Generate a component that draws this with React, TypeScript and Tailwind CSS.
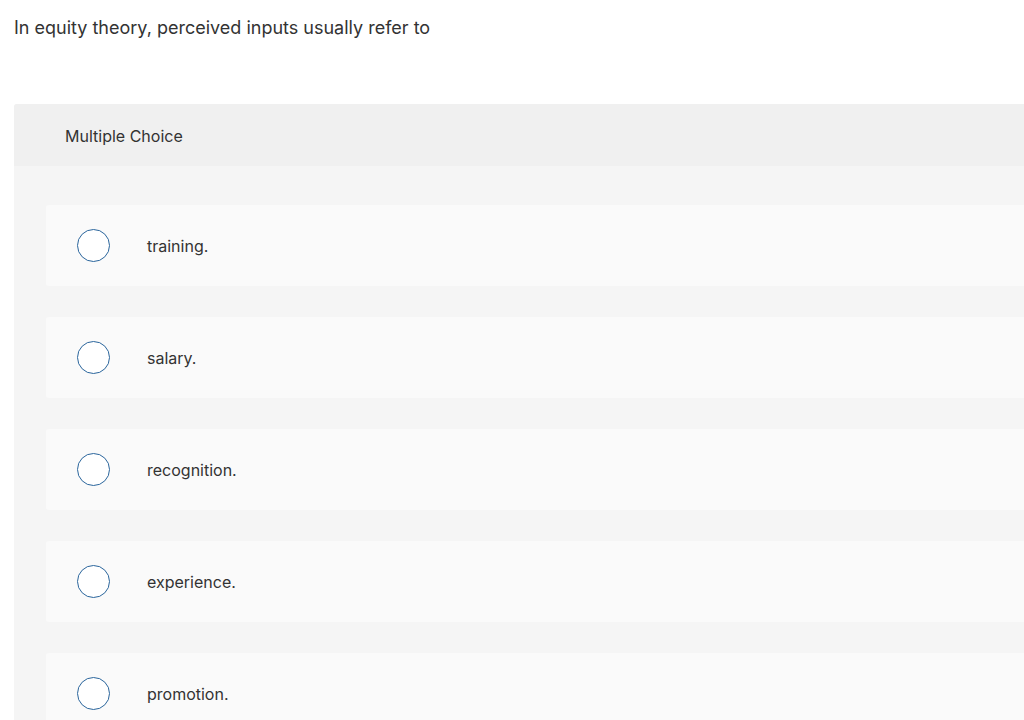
const options = ["training.", "salary.", "recognition.", "experience.", "promotion."];

function Option({ text }: { text: string }) {
    return (
        <div className="flex items-center h-[81px] bg-[#fafafa] rounded-[3px]">
            <span className="ml-[31px] w-[33px] h-[33px] rounded-full border-[1.5px] border-[#2a659c] bg-white shrink-0" />
            <span className="ml-[37px] pt-[1px] text-[16px] text-[#333333]">{text}</span>
        </div>
    );
}

export default function App() {
    return (
        <div className="h-screen overflow-hidden bg-white" style={{ fontFamily: "Inter, Lato, sans-serif" }}>
            <div className="pt-[16px] pl-[14px] text-[18px] leading-[24px] text-[#333333]">
                In equity theory, perceived inputs usually refer to
            </div>

            <div className="mt-[64px] ml-[14px] w-[1100px] rounded-[3px] bg-[#f5f5f5]">
                <div className="h-[62px] flex items-center pl-[51px] pt-[2px] bg-[#f0f0f0] rounded-t-[3px] text-[16px] text-[#333333]">
                    Multiple Choice
                </div>
                <div className="pt-[39px] pl-[32px] flex flex-col gap-[31px] pb-[31px]">
                    {options.map((o) => (
                        <Option key={o} text={o} />
                    ))}
                </div>
            </div>
        </div>
    );
}
